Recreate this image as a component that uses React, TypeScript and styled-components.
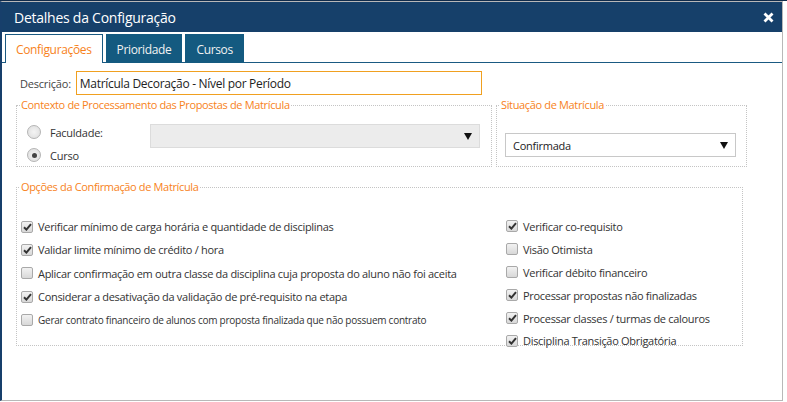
import styled, { createGlobalStyle } from 'styled-components';

const GlobalStyle = createGlobalStyle`
  html, body {
    margin: 0;
    padding: 0;
    background: #fff;
    font-family: "Open Sans", "Noto Sans", sans-serif;
  }
`;

type Opt = { label: string; checked: boolean; small?: boolean };

const leftOptions: Opt[] = [
  { label: 'Verificar mínimo de carga horária e quantidade de disciplinas', checked: true },
  { label: 'Validar limite mínimo de crédito / hora', checked: true },
  { label: 'Aplicar confirmação em outra classe da disciplina cuja proposta do aluno não foi aceita', checked: false },
  { label: 'Considerar a desativação da validação de pré-requisito na etapa', checked: true },
  { label: 'Gerar contrato financeiro de alunos com proposta finalizada que não possuem contrato', checked: false, small: true },
];

const rightOptions: Opt[] = [
  { label: 'Verificar co-requisito', checked: true },
  { label: 'Visão Otimista', checked: false },
  { label: 'Verificar débito financeiro', checked: false },
  { label: 'Processar propostas não finalizadas', checked: true },
  { label: 'Processar classes / turmas de calouros', checked: true },
  { label: 'Disciplina Transição Obrigatória', checked: true },
];

const CheckMark = () => (
  <svg width="9" height="8" viewBox="0 0 9 8">
    <path d="M1 4.2 L3.4 6.6 L8 1.2" fill="none" stroke="#333" strokeWidth="2" />
  </svg>
);

const Arrow = () => (
  <svg width="8" height="7" viewBox="0 0 8 7">
    <path d="M0 0 H8 L4 7 Z" fill="#111" />
  </svg>
);

export default function App() {
  return (
    <>
      <GlobalStyle />
      <Backdrop>
        <Dialog>
          <TitleBar>
            <Title>Detalhes da Configuração</Title>
            <Close>
              <svg width="11" height="11" viewBox="0 0 11 11">
                <path d="M1.5 1.5 L9.5 9.5 M9.5 1.5 L1.5 9.5" stroke="#fff" strokeWidth="2.8" />
              </svg>
            </Close>
          </TitleBar>
          <Tabs>
            <Tab $active>Configurações</Tab>
            <Tab>Prioridade</Tab>
            <Tab>Cursos</Tab>
          </Tabs>
          <Body>
            <DescRow>
              <Label>Descrição:</Label>
              <TextInput defaultValue="Matrícula Decoração - Nível por Período" />
            </DescRow>
            <TopGroups>
              <Group $width={476} $height={69}>
                <Legend>Contexto de Processamento das Propostas de Matrícula</Legend>
                <ContextBody>
                  <Radios>
                    <RadioRow>
                      <Radio />
                      <RadioText>Faculdade:</RadioText>
                    </RadioRow>
                    <RadioRow>
                      <Radio $checked />
                      <RadioText>Curso</RadioText>
                    </RadioRow>
                  </Radios>
                  <Select $disabled $width={330}>
                    <span></span>
                    <Arrow />
                  </Select>
                </ContextBody>
              </Group>
              <Group $width={251} $height={69}>
                <Legend>Situação de Matrícula</Legend>
                <SituacaoBody>
                  <Select $width={231}>
                    <span>Confirmada</span>
                    <Arrow />
                  </Select>
                </SituacaoBody>
              </Group>
            </TopGroups>
            <Group $width={727} $height={166} $fixed>
              <Legend>Opções da Confirmação de Matrícula</Legend>
              <OptionsGrid>
                <OptionCol>
                  {leftOptions.map((o) => (
                    <OptionRow key={o.label} $gap={23.3}>
                      <Check>{o.checked && <CheckMark />}</Check>
                      <OptionText $small={o.small}>{o.label}</OptionText>
                    </OptionRow>
                  ))}
                </OptionCol>
                <OptionCol>
                  {rightOptions.map((o) => (
                    <OptionRow key={o.label} $gap={22.9}>
                      <Check>{o.checked && <CheckMark />}</Check>
                      <OptionText>{o.label}</OptionText>
                    </OptionRow>
                  ))}
                </OptionCol>
              </OptionsGrid>
            </Group>
          </Body>
        </Dialog>
      </Backdrop>
    </>
  );
}

const Backdrop = styled.div`
  width: 787px;
  height: 402px;
  border-top: 1px solid #102b4b;
  box-sizing: border-box;
  overflow: hidden;
`;

const Dialog = styled.div`
  width: 783px;
  height: 400px;
  box-sizing: border-box;
  border: 1px solid #b8b8b8;
  border-left: 2px solid #173f6b;
  display: flex;
  flex-direction: column;
  background: #fff;
`;

const TitleBar = styled.div`
  height: 30px;
  background: #16406a;
  display: flex;
  align-items: center;
  justify-content: space-between;
  padding: 0 8px 0 12px;
`;

const Title = styled.div`
  color: #fff;
  font-size: 14px;
  letter-spacing: -0.25px;
`;

const Close = styled.div`
  display: flex;
  align-items: center;
`;

const Tabs = styled.div`
  display: flex;
  gap: 3px;
  padding: 2px 0 0 3px;
  border-bottom: 1px solid #1a5a82;
  height: 28px;
`;

const Tab = styled.div<{ $active?: boolean }>`
  box-sizing: border-box;
  height: 29px;
  padding: 0 10px;
  display: flex;
  align-items: center;
  font-size: 12px;
  letter-spacing: -0.35px;
  color: ${(p) => (p.$active ? '#f7821b' : '#f2f2f2')};
  background: ${(p) => (p.$active ? '#fff' : '#145a80')};
  border: 1px solid ${(p) => (p.$active ? '#1a5a82' : '#145a80')};
  border-bottom: none;
`;

const Body = styled.div`
  padding: 8px 0 0 14px;
  display: flex;
  flex-direction: column;
`;

const DescRow = styled.div`
  display: flex;
  align-items: center;
  gap: 5px;
  padding-left: 4px;
  height: 24px;
`;

const Label = styled.span`
  font-size: 11px;
  color: #444;
  letter-spacing: -0.2px;
`;

const TextInput = styled.input`
  width: 406px;
  height: 24px;
  box-sizing: border-box;
  border: 1px solid #f0a020;
  padding: 0 3px;
  font-family: inherit;
  font-size: 12px;
  letter-spacing: -0.3px;
  color: #222;
  outline: none;
`;

const TopGroups = styled.div`
  display: flex;
  gap: 4px;
  margin-top: 3px;
  margin-bottom: 13px;
`;

const Group = styled.fieldset<{ $width: number; $height: number; $fixed?: boolean }>`
  box-sizing: border-box;
  width: ${(p) => p.$width}px;
  ${(p) => (p.$fixed ? `height: ${p.$height}px;` : `min-height: ${p.$height}px;`)}
  margin: 0;
  padding: 0;
  border: 1px dotted #c4c4c4;
`;

const Legend = styled.legend`
  color: #f7821b;
  font-size: 11px;
  letter-spacing: -0.35px;
  padding: 0 1px;
  margin-left: 3px;
  line-height: 14px;
`;

const ContextBody = styled.div`
  display: flex;
  align-items: flex-start;
  padding: 12px 0 0 10px;
`;

const Radios = styled.div`
  display: flex;
  flex-direction: column;
  gap: 9px;
  width: 123px;
  margin-top: 1px;
`;

const RadioRow = styled.div`
  display: flex;
  align-items: center;
  gap: 9px;
  height: 14px;
`;

const Radio = styled.span<{ $checked?: boolean }>`
  width: 12px;
  height: 12px;
  border-radius: 50%;
  border: 1px solid #b4b4b4;
  background: radial-gradient(circle, #f4f4f4 0%, #dcdcdc 100%);
  display: flex;
  align-items: center;
  justify-content: center;
  &::after {
    content: '';
    width: 5px;
    height: 5px;
    border-radius: 50%;
    background: ${(p) => (p.$checked ? '#444' : 'transparent')};
  }
`;

const RadioText = styled.span`
  font-size: 11px;
  color: #333;
  letter-spacing: -0.25px;
`;

const Select = styled.div<{ $disabled?: boolean; $width: number }>`
  box-sizing: border-box;
  width: ${(p) => p.$width}px;
  height: 24px;
  display: flex;
  align-items: center;
  justify-content: space-between;
  padding: 0 7px 0 7px;
  background: ${(p) => (p.$disabled ? '#ececec' : '#fff')};
  border: 1px solid ${(p) => (p.$disabled ? '#dcdcdc' : '#c8c8c8')};
  font-size: 11px;
  letter-spacing: -0.25px;
  color: #222;
`;

const SituacaoBody = styled.div`
  padding: 21px 0 0 8px;
`;

const OptionsGrid = styled.div`
  display: grid;
  grid-template-columns: 485px 1fr;
  padding: 21px 0 0 4px;
`;

const OptionCol = styled.div`
  display: flex;
  flex-direction: column;
`;

const OptionRow = styled.div<{ $gap: number }>`
  display: flex;
  align-items: center;
  gap: 5px;
  height: ${(p) => p.$gap}px;
`;

const Check = styled.span`
  box-sizing: border-box;
  flex: none;
  width: 12px;
  height: 12px;
  border-radius: 2px;
  border: 1px solid #a9a9a9;
  background: linear-gradient(#f2f2f2, #d8d8d8);
  display: flex;
  align-items: center;
  justify-content: center;
`;

const OptionText = styled.span<{ $small?: boolean }>`
  font-size: ${(p) => (p.$small ? '10px' : '11px')};
  color: #333;
  letter-spacing: ${(p) => (p.$small ? '-0.25px' : '-0.3px')};
  white-space: nowrap;
`;
